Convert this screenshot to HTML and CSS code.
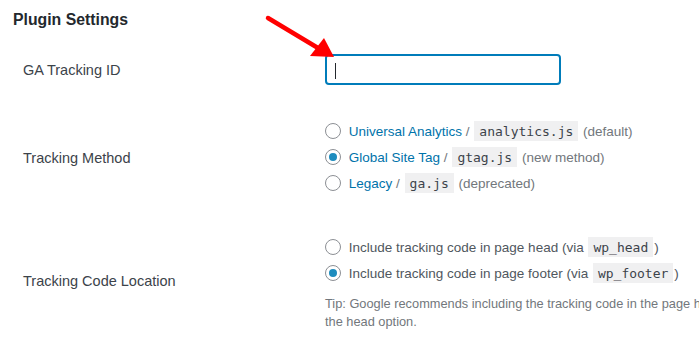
FILE: index.html
```html
<!DOCTYPE html>
<html>
<head>
  <meta charset="UTF-8">
  <title>Plugin Settings</title>
  <link rel="stylesheet" href="styles.css">
</head>
<body>
  <div class="wrap">
    <h2 class="section-title">Plugin Settings</h2>

    <div class="form-table">
      <div class="form-row first">
        <div class="form-label">GA Tracking ID</div>
        <div class="form-field">
          <div class="text-input is-focused"><span class="caret"></span></div>
        </div>
      </div>

      <div class="form-row">
        <div class="form-label">Tracking Method</div>
        <div class="form-field">
          <label class="option"><input type="radio" name="method"> <a href="#">Universal Analytics</a> <span class="muted">/</span> <code>analytics.js</code> <span class="muted">(default)</span></label>
          <label class="option"><input type="radio" name="method" checked> <a href="#">Global Site Tag</a> <span class="muted">/</span> <code>gtag.js</code> <span class="muted">(new method)</span></label>
          <label class="option"><input type="radio" name="method"> <a href="#">Legacy</a> <span class="muted">/</span> <code>ga.js</code> <span class="muted">(deprecated)</span></label>
        </div>
      </div>

      <div class="form-row">
        <div class="form-label shifted">Tracking Code Location</div>
        <div class="form-field">
          <label class="option"><input type="radio" name="location"> Include tracking code in page head (via <code>wp_head</code>)</label>
          <label class="option"><input type="radio" name="location" checked> Include tracking code in page footer (via <code>wp_footer</code>)</label>
          <p class="description">Tip: Google recommends including the tracking code in the page head, but including it in the footer can benefit page performance. If in doubt, go with<br>the head option.</p>
        </div>
      </div>
    </div>

    <svg class="callout-arrow" width="80" height="60" viewBox="260 10 80 60">
      <line x1="268" y1="18" x2="318" y2="48" stroke="#ff0000" stroke-width="4.5" stroke-linecap="round"/>
      <polygon points="334,57 310,56 324,38" fill="#ff0000"/>
    </svg>
  </div>
</body>
</html>
```

FILE: styles.css
```css
body {
  margin: 0;
  background-color: #ffffff;
  font-family: "Liberation Sans", Arial, sans-serif;
  font-size: 13.5px;
  color: #444444;
  overflow: hidden;
}

.wrap {
  position: relative;
  padding: 10px 0 0 13px;
  width: 1400px;
}

.section-title {
  margin: 0 0 9px 0;
  font-size: 15.8px;
  line-height: 20px;
  font-weight: bold;
  color: #23282d;
}

.form-table {
  margin-left: 10px;
}

.form-row {
  display: grid;
  grid-template-columns: 302px 1fr;
  align-items: center;
  padding: 19px 0 19px 0;
}

.form-row.first {
  padding: 15px 0 15px 0;
}

.form-label {
  font-size: 14.5px;
  color: #3c434a;
}

.form-label.shifted {
  margin-bottom: 5px;
}

.text-input {
  box-sizing: border-box;
  width: 236px;
  height: 31px;
  border: 2px solid #007cba;
  border-radius: 4px;
  background: #ffffff;
  padding: 7px 0 0 8px;
}

.caret {
  display: block;
  width: 1px;
  height: 16px;
  background: #23282d;
}

.option {
  display: block;
  line-height: 26px;
  white-space: nowrap;
  color: #50575e;
}

.option a {
  color: #0073aa;
  text-decoration: none;
}

.muted {
  color: #72777c;
}

input[type="radio"] {
  -webkit-appearance: none;
  appearance: none;
  box-sizing: border-box;
  width: 16px;
  height: 16px;
  margin: 0 4px 0 0;
  border: 1px solid #8c8f94;
  border-radius: 50%;
  background: #ffffff;
  vertical-align: -3px;
  position: relative;
}

input[type="radio"]:checked::before {
  content: "";
  position: absolute;
  left: 3px;
  top: 3px;
  width: 8px;
  height: 8px;
  border-radius: 50%;
  background: #1e8cbe;
}

code {
  font-family: "DejaVu Sans Mono", "Liberation Mono", monospace;
  font-size: 13px;
  line-height: 15px;
  padding: 3px 5px 2px 5px;
  margin: 0 1px;
  background: #f0f0f1;
  color: #3c434a;
}

.description {
  margin: 8px 0 0 0;
  font-size: 12.8px;
  line-height: 18px;
  color: #72777c;
  white-space: nowrap;
}

.callout-arrow {
  position: absolute;
  left: 260px;
  top: 10px;
}
```
